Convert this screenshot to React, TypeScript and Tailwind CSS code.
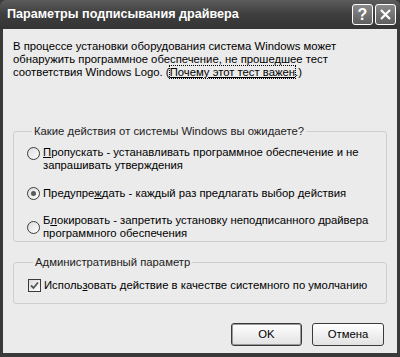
import React from "react"

const font = { fontFamily: '"Liberation Sans", Arial, sans-serif' }

function Radio({ checked }: { checked?: boolean }) {
  return (
    <span className="relative mt-[1px] flex h-[13px] w-[13px] shrink-0 items-center justify-center rounded-full border border-[#3a3a3a] bg-gradient-to-br from-[#dcdcdc] to-white">
      {checked && <span className="h-[5px] w-[5px] rounded-full bg-[#5a5a5a]" />}
    </span>
  )
}

function TitleButton({ children }: { children: React.ReactNode }) {
  return (
    <div className="flex h-[21px] w-[21px] items-center justify-center rounded-[3px] border border-white bg-gradient-to-b from-[#8a8a8a] to-[#5e5e5e]">
      {children}
    </div>
  )
}

export default function App() {
  return (
    <div className="flex h-[357px] w-[400px] flex-col bg-[#3a3a3a] text-[11.3px] text-black" style={font}>
      {/* title bar */}
      <div className="flex h-[29px] shrink-0 items-center justify-between rounded-t-[6px] bg-gradient-to-b from-[#5c5c5c] via-[#3e3e3e] to-[#343434] pl-[7px] pr-[4px]">
        <span className="text-[12.6px] font-bold text-white">Параметры подписывания драйвера</span>
        <div className="flex gap-[2px]">
          <TitleButton>
            <span className="text-[16px] font-bold leading-none text-white">?</span>
          </TitleButton>
          <TitleButton>
            <svg width="13" height="13" viewBox="0 0 13 13">
              <path d="M2 2 L11 11 M11 2 L2 11" stroke="white" strokeWidth="2.2" />
            </svg>
          </TitleButton>
        </div>
      </div>

      {/* body */}
      <div className="mx-[3px] mb-[4px] flex flex-1 flex-col bg-[#ebebeb] px-[10px] pt-[11px]">
        <p className="leading-[13px]">
          В процессе установки оборудования система Windows может
          <br />
          обнаружить программное обеспечение, не прошедшее тест
          <br />
          соответствия Windows Logo. (
          <span className="underline outline outline-1 outline-dotted outline-black">Почему этот тест важен</span>
          .)
        </p>

        {/* group 1 */}
        <fieldset className="mt-[46px] h-[117px] rounded-[3px] border border-[#cfcfcf] pl-[13px] pr-2">
          <legend className="ml-[5px] px-[2px] leading-[12px] text-[#222]">Какие действия от системы Windows вы ожидаете?</legend>
          <div className="mt-[9px] flex gap-[3px]">
            <Radio />
            <span className="leading-[13px]">
              <u>П</u>ропускать - устанавливать программное обеспечение и не
              <br />
              запрашивать утверждения
            </span>
          </div>
          <div className="mt-[13px] flex items-center gap-[3px]">
            <Radio checked />
            <span>
              Предупре<u>ж</u>дать - каждый раз предлагать выбор действия
            </span>
          </div>
          <div className="mt-[12px] flex gap-[3px]">
            <span className="mt-[6px]">
              <Radio />
            </span>
            <span className="leading-[13px]">
              Б<u>л</u>окировать - запретить установку неподписанного драйвера
              <br />
              программного обеспечения
            </span>
          </div>
        </fieldset>

        {/* group 2 */}
        <fieldset className="mt-[14px] h-[48px] rounded-[3px] border border-[#cfcfcf] pl-[14px]">
          <legend className="ml-[5px] px-[2px] leading-[12px] text-[#222]">Административный параметр</legend>
          <div className="mt-[9px] flex items-center gap-[3px]">
            <span className="flex h-[13px] w-[13px] items-center justify-center border border-[#3a3a3a] bg-gradient-to-br from-[#dcdcdc] to-white">
              <svg width="9" height="9" viewBox="0 0 9 9">
                <path d="M1 4.5 L3.5 7 L8 1.5" stroke="#555" strokeWidth="1.8" fill="none" />
              </svg>
            </span>
            <span>
              Исполь<u>з</u>овать действие в качестве системного по умолчанию
            </span>
          </div>
        </fieldset>

        <div className="mt-[19px] flex justify-end gap-[10px] pr-[3px]">
          <button className="h-[23px] w-[71px] rounded-[3px] border border-[#3a3a3a] bg-gradient-to-b from-white to-[#e2e2e2] shadow-[inset_0_0_0_1px_#9a9a9a]">
            OK
          </button>
          <button className="h-[23px] w-[72px] rounded-[3px] border border-[#3a3a3a] bg-gradient-to-b from-white to-[#e2e2e2]">
            Отмена
          </button>
        </div>
      </div>
    </div>
  )
}
